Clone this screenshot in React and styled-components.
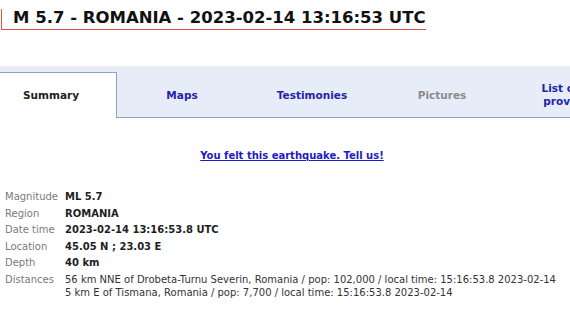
import styled, { createGlobalStyle } from "styled-components";

const GlobalStyle = createGlobalStyle`
  body {
    margin: 0;
    background: #ffffff;
    font-family: "DejaVu Sans", Verdana, sans-serif;
    overflow: hidden;
  }
`;

const tabs = [
  { label: "Summary", active: true },
  { label: "Maps" },
  { label: "Testimonies" },
  { label: "Pictures", disabled: true },
  { label: "List of felt provinces" },
];

const rows = [
  ["Magnitude", "ML 5.7"],
  ["Region", "ROMANIA"],
  ["Date time", "2023-02-14 13:16:53.8 UTC"],
  ["Location", "45.05 N ; 23.03 E"],
  ["Depth", "40 km"],
];

const distances = [
  "56 km NNE of Drobeta-Turnu Severin, Romania / pop: 102,000 / local time: 15:16:53.8 2023-02-14",
  "5 km E of Tismana, Romania / pop: 7,700 / local time: 15:16:53.8 2023-02-14",
];

const App = () => {
  return (
    <Page>
      <GlobalStyle />
      <Title>M 5.7 - ROMANIA - 2023-02-14 13:16:53 UTC</Title>
      <TabBar>
        {tabs.map((tab) => (
          <Tab key={tab.label} $active={tab.active} $disabled={tab.disabled}>
            {tab.label}
          </Tab>
        ))}
      </TabBar>
      <FeltLinkRow>
        <FeltLink href="#">You felt this earthquake. Tell us!</FeltLink>
      </FeltLinkRow>
      <InfoTable>
        {rows.map(([label, value]) => (
          <InfoRow key={label}>
            <InfoLabel>{label}</InfoLabel>
            <InfoValue>{value}</InfoValue>
          </InfoRow>
        ))}
        <InfoRow>
          <InfoLabel>Distances</InfoLabel>
          <DistanceList>
            {distances.map((d) => (
              <div key={d}>{d}</div>
            ))}
          </DistanceList>
        </InfoRow>
      </InfoTable>
    </Page>
  );
};

const Page = styled.div`
  width: 570px;
  height: 317px;
  overflow: hidden;
  padding-top: 8px;
  box-sizing: border-box;
`;

const Title = styled.h1`
  display: inline-block;
  margin: 0 0 0 1px;
  padding: 0 0 2px 11px;
  border-left: 1px solid #e05050;
  border-bottom: 1px solid #e05050;
  font-size: 16.5px;
  line-height: 18px;
  font-weight: bold;
  color: #111;
  white-space: nowrap;
`;

const TabBar = styled.div`
  display: flex;
  margin-top: 36px;
  height: 52px;
  background: #e6edf9;
  border-bottom: 1px solid #8ea2c8;
  box-sizing: border-box;
`;

const Tab = styled.div`
  flex: 0 0 ${(p) => (p.$active ? "117px" : "130px")};
  min-width: 0;
  box-sizing: border-box;
  display: flex;
  align-items: center;
  justify-content: center;
  text-align: center;
  padding: 7px 8px 0;
  font-size: 10.5px;
  line-height: 13px;
  font-weight: bold;
  color: ${(p) => (p.$active ? "#222" : p.$disabled ? "#8a8a8a" : "#2424a8")};
  ${(p) =>
    p.$active &&
    `
    margin-top: 6px;
    height: 46px;
    padding: 0 14px 0 0;
    background: #ffffff;
    border-top: 1px solid #8ea2c8;
    border-right: 1px solid #8ea2c8;
  `}
`;

const FeltLinkRow = styled.div`
  display: flex;
  justify-content: center;
  margin-top: 31px;
  padding-left: 14px;
`;

const FeltLink = styled.a`
  font-size: 10px;
  line-height: 13px;
  font-weight: bold;
  color: #1b1bc8;
  text-decoration: underline;
`;

const InfoTable = styled.div`
  display: flex;
  flex-direction: column;
  gap: 3.6px;
  margin-top: 28px;
  padding-left: 5px;
`;

const InfoRow = styled.div`
  display: grid;
  grid-template-columns: 60px auto;
  font-size: 10px;
  line-height: 13px;
  white-space: nowrap;
`;

const InfoLabel = styled.div`
  color: #7a7a7a;
`;

const InfoValue = styled.div`
  color: #1e1e1e;
  font-weight: bold;
`;

const DistanceList = styled.div`
  color: #333;
`;

export default App;
